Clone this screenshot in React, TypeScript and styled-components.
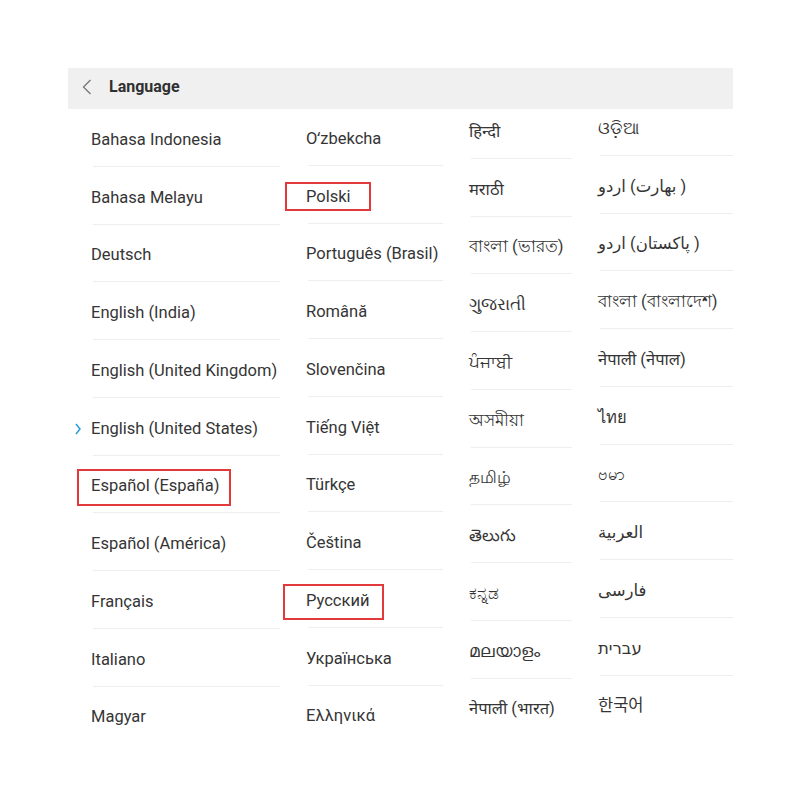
import React from "react";
import styled, { createGlobalStyle } from "styled-components";

const GlobalStyle = createGlobalStyle`
  html, body {
    margin: 0;
    padding: 0;
    background: #ffffff;
  }
  body {
    font-family: Roboto, "Noto Sans", "DejaVu Sans", "Noto Sans CJK KR", sans-serif;
    color: #333333;
  }
`;

type Lang = {
  name: React.ReactNode;
  current?: boolean;
  mark?: { top: number; left: number; width: number; height: number };
};

type ColumnData = {
  width: number;
  lift: number;
  items: Lang[];
};

// each Urdu word is its own inline box, so the name stays left of the region
const Word = styled.span`
  display: inline-block;
`;

const urdu = (region: string) => (
  <>
    <Word>اردو</Word> (<Word>{region}</Word> )
  </>
);

const columns: ColumnData[] = [
  {
    width: 212,
    lift: 0,
    items: [
      { name: "Bahasa Indonesia" },
      { name: "Bahasa Melayu" },
      { name: "Deutsch" },
      { name: "English (India)" },
      { name: "English (United Kingdom)" },
      { name: "English (United States)", current: true },
      { name: "Español (España)", mark: { top: -7, left: -14, width: 154, height: 37 } },
      { name: "Español (América)" },
      { name: "Français" },
      { name: "Italiano" },
      { name: "Magyar" },
    ],
  },
  {
    width: 160,
    lift: 1,
    items: [
      { name: "Oʻzbekcha" },
      { name: "Polski", mark: { top: -5, left: -21, width: 86, height: 29 } },
      { name: "Português (Brasil)" },
      { name: "Română" },
      { name: "Slovenčina" },
      { name: "Tiếng Việt" },
      { name: "Türkçe" },
      { name: "Čeština" },
      { name: "Русский", mark: { top: -7, left: -23, width: 101, height: 36 } },
      { name: "Українська" },
      { name: "Ελληνικά" },
    ],
  },
  {
    width: 126,
    lift: 8,
    items: [
      { name: "हिन्दी" },
      { name: "मराठी" },
      { name: "বাংলা (ভারত)" },
      { name: "ગુજરાતી" },
      { name: "ਪੰਜਾਬੀ" },
      { name: "অসমীয়া" },
      { name: "தமிழ்" },
      { name: "తెలుగు" },
      { name: "ಕನ್ನಡ" },
      { name: "മലയാളം" },
      { name: "नेपाली (भारत)" },
    ],
  },
  {
    width: 158,
    lift: 11,
    items: [
      { name: "ଓଡ଼ିଆ" },
      { name: urdu("بھارت") },
      { name: urdu("پاکستان") },
      { name: "বাংলা (বাংলাদেশ)" },
      { name: "नेपाली (नेपाल)" },
      { name: "ไทย" },
      { name: "ဗမာ" },
      { name: "العربية" },
      { name: "فارسی" },
      { name: "עברית" },
      { name: "한국어" },
    ],
  },
];

const Page = styled.div`
  padding: 68px 0 0 68px;
`;

const Panel = styled.div`
  width: 665px;
`;

const Header = styled.div`
  box-sizing: border-box;
  height: 41px;
  padding: 0 0 4px 14px;
  background: #f0f0f0;
  display: flex;
  align-items: center;
`;

const BackIcon = styled.svg`
  width: 10px;
  height: 16px;
  flex: none;
`;

const Title = styled.span`
  margin-left: 17px;
  font-size: 16px;
  font-weight: 700;
  color: #303030;
`;

const Grid = styled.div`
  display: flex;
  gap: 3px;
`;

const Column = styled.div<{ $width: number; $lift: number }>`
  width: ${(p) => p.$width}px;
  margin-top: ${(p) => -p.$lift}px;
  display: flex;
  flex-direction: column;
`;

const Row = styled.div`
  box-sizing: border-box;
  height: 57.75px;
  margin-left: 25px;
  padding-top: 5px;
  display: flex;
  align-items: center;
  border-bottom: 1px solid #eeeeee;

  &:last-child {
    border-bottom-color: transparent;
  }
`;

const Label = styled.span`
  position: relative;
  margin-left: -2px;
  font-size: 16.5px;
  line-height: 20px;
  white-space: nowrap;
  color: #353535;
`;

const Current = styled.svg`
  position: absolute;
  right: 100%;
  top: 4px;
  margin-right: 10px;
  width: 6px;
  height: 12px;
`;

const Mark = styled.span`
  position: absolute;
  box-sizing: border-box;
  border: 2px solid #e23a3a;
  pointer-events: none;
`;

export default function App() {
  return (
    <>
      <GlobalStyle />
      <Page>
        <Panel>
          <Header>
            <BackIcon viewBox="0 0 10 16">
              <path d="M8.5 1 L1.5 8 L8.5 15" fill="none" stroke="#777" strokeWidth="1.3" />
            </BackIcon>
            <Title>Language</Title>
          </Header>
          <Grid>
            {columns.map((col, ci) => (
              <Column key={ci} $width={col.width} $lift={col.lift}>
                {col.items.map((item, i) => (
                  <Row key={i}>
                    <Label>
                      {item.current && (
                        <Current viewBox="0 0 6 12">
                          <path d="M1 1 L5 6 L1 11" fill="none" stroke="#2a9ae0" strokeWidth="1.5" />
                        </Current>
                      )}
                      {item.name}
                      {item.mark && (
                        <Mark
                          style={{
                            top: item.mark.top,
                            left: item.mark.left,
                            width: item.mark.width,
                            height: item.mark.height,
                          }}
                        />
                      )}
                    </Label>
                  </Row>
                ))}
              </Column>
            ))}
          </Grid>
        </Panel>
      </Page>
    </>
  );
}
